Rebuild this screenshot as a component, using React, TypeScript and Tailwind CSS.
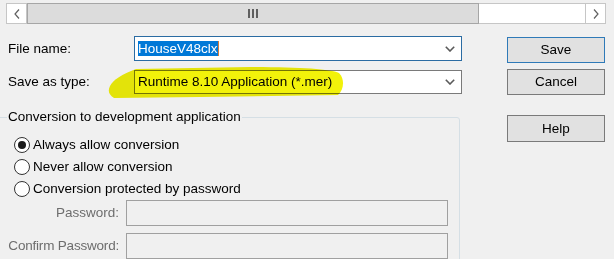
export default function App() {
  return (
    <div className="relative h-[259px] w-[614px] overflow-hidden bg-[#f0f0f0] font-['Liberation_Sans',Arial,sans-serif] text-[13.5px] leading-[16px] text-black">
      {/* Horizontal scrollbar */}
      <div className="pl-[6px] pt-[3px]">
        <div className="flex h-[21px] w-[600px] border border-[#c6c6c6] bg-white">
          <div className="flex w-[20px] items-center justify-center border-r border-[#c6c6c6]">
            <svg width="6" height="10" viewBox="0 0 6 10">
              <path d="M5 0.5 L1 5 L5 9.5" fill="none" stroke="#606060" strokeWidth="1.2" />
            </svg>
          </div>
          <div className="-my-px flex h-[21px] w-[452px] items-center justify-center gap-[2px] border border-[#a6a6a6] bg-[#dcdcdc]">
            <div className="h-[9px] w-[2px] bg-[#606060]" />
            <div className="h-[9px] w-[2px] bg-[#606060]" />
            <div className="h-[9px] w-[2px] bg-[#606060]" />
          </div>
          <div className="flex-1" />
          <div className="flex w-[20px] items-center justify-center border-l border-[#c6c6c6]">
            <svg width="6" height="10" viewBox="0 0 6 10">
              <path d="M1 0.5 L5 5 L1 9.5" fill="none" stroke="#606060" strokeWidth="1.2" />
            </svg>
          </div>
        </div>
      </div>

      <div className="flex">
        {/* Left column */}
        <div className="w-[507px]">
          <div className="mt-[12px] flex h-[25px] items-center pl-[8px]">
            <div className="w-[126px]">File name:</div>
            <div className="flex h-[25px] w-[328px] items-center border border-[#2b6ca3] bg-white pl-[3px]">
              <span className="bg-[#0078d7] leading-[15px] text-white">HouseV48clx</span>
              <span className="h-[15px] w-px bg-[#d27b3a]" />
              <div className="flex-1" />
              <Chevron />
            </div>
          </div>
          <div className="mt-[9px] flex h-[24px] items-center pl-[8px]">
            <div className="w-[126px]">Save as type:</div>
            <div className="flex h-[24px] w-[328px] items-center border border-[#7a7a7a] bg-white pl-[3px]">
              <span>Runtime 8.10 Application (*.mer)</span>
              <div className="flex-1" />
              <Chevron />
            </div>
          </div>

          <fieldset className="-ml-[10px] mt-[15px] h-[200px] w-[470px] rounded-[3px] border border-[#d5dfe5] pl-[16px]">
            <legend className="px-[1px] leading-[16px]">Conversion to development application</legend>
            <Radio checked label="Always allow conversion" className="mt-[9px]" />
            <Radio label="Never allow conversion" />
            <Radio label="Conversion protected by password" />
            <div className="flex h-[26px] items-center">
              <div className="w-[112px] text-right text-[#6d6d6d]">Password:</div>
              <div className="ml-[7px] h-[26px] w-[322px] border border-[#a0a0a0]" />
            </div>
            <div className="mt-[7px] flex h-[26px] items-center">
              <div className="w-[112px] whitespace-nowrap text-right tracking-[-0.2px] text-[#6d6d6d]">Confirm Password:</div>
              <div className="ml-[7px] h-[26px] w-[322px] border border-[#a0a0a0]" />
            </div>
          </fieldset>
        </div>

        {/* Right column: buttons */}
        <div className="flex w-[98px] flex-col">
          <button className="mt-[13px] h-[26px] border border-[#2f7ab8] bg-[#e1e1e1]">Save</button>
          <button className="mt-[6px] h-[26px] border border-[#7a7a7a] bg-[#e1e1e1]">Cancel</button>
          <button className="mt-[20px] h-[27px] border border-[#7a7a7a] bg-[#e1e1e1]">Help</button>
        </div>
      </div>

      {/* Highlighter marking */}
      <svg className="pointer-events-none absolute left-0 top-0 mix-blend-multiply" width="614" height="259">
        <path
          d="M110 86 C113 80 122 74 136 69 L250 67 C300 67 330 69 339 73 C345 79 344 90 338 95 L200 97 L114 98 C108 94 108 90 110 86 Z"
          fill="#f2f20a"
        />
      </svg>
    </div>
  );
}

function Chevron() {
  return (
    <svg className="mr-[6px]" width="10" height="6" viewBox="0 0 10 6">
      <path d="M0.8 0.8 L5 5 L9.2 0.8" fill="none" stroke="#5a5a5a" strokeWidth="1.6" />
    </svg>
  );
}

function Radio({ label, checked, className = "" }: { label: string; checked?: boolean; className?: string }) {
  return (
    <div className={`flex h-[22px] items-center ${className}`}>
      <div className="ml-[7px] flex h-[16px] w-[16px] items-center justify-center rounded-full border border-[#333] bg-white">
        {checked && <div className="h-[8px] w-[8px] rounded-full bg-[#1a1a1a]" />}
      </div>
      <span className="ml-[3px]">{label}</span>
    </div>
  );
}
